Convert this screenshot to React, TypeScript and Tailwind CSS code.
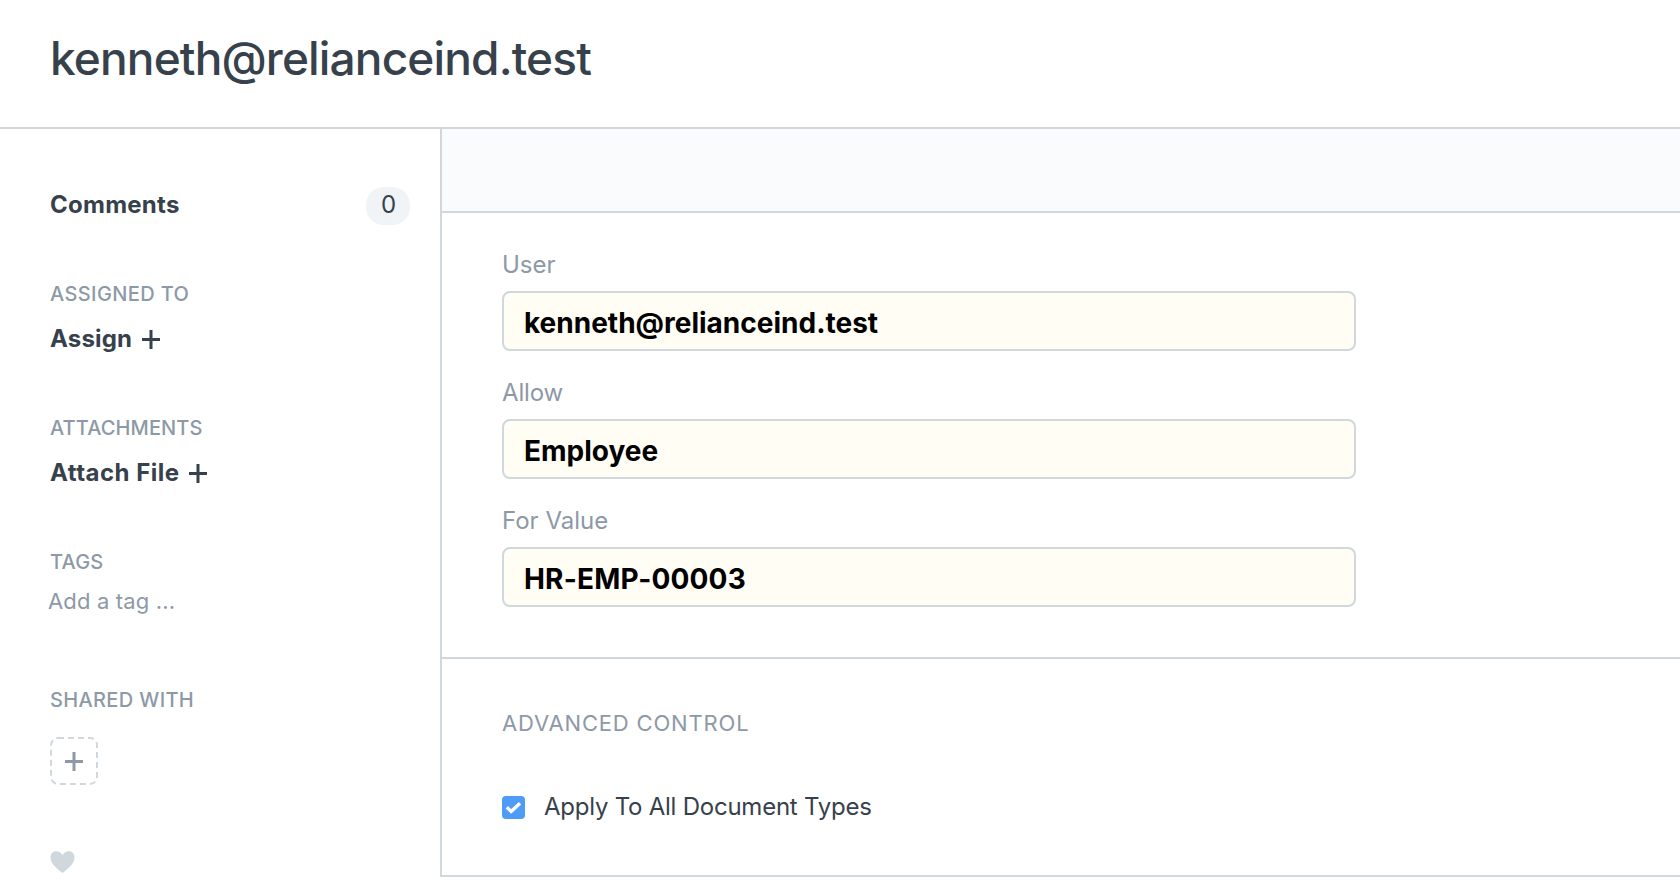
import type { ReactNode } from "react";

function Plus({ className = "" }: { className?: string }) {
  return (
    <svg className={`h-[19px] w-[18px] shrink-0 ${className}`} viewBox="0 0 18 19" fill="none" stroke="currentColor" strokeWidth="3">
      <path d="M0 9.5h18M9 0v19" />
    </svg>
  );
}

function SideHeading({ children, className = "" }: { children: ReactNode; className?: string }) {
  return <h2 className={`h-7 text-[20px] leading-7 font-medium whitespace-nowrap text-[#8d99a6] ${className}`}>{children}</h2>;
}

function SideAction({ label, spacing }: { label: string; spacing: string }) {
  return (
    <button className="mt-4 flex h-[30px] items-center text-2xl leading-[30px] font-bold whitespace-nowrap">
      <span className={spacing}>{label}</span>
      <Plus className="ml-[10px]" />
    </button>
  );
}

function Field({ label, value, labelSpacing, spacing }: { label: string; value: string; labelSpacing: string; spacing: string }) {
  return (
    <div className="mb-[26px]">
      <div className={`h-[42px] pt-px text-2xl leading-[30px] text-[#8d99a6] ${labelSpacing}`}>{label}</div>
      <div className="flex h-[60px] w-[854px] items-center rounded-[8px] border-2 border-[#d1d8dd] bg-[#fffdf4] pt-[3px] pl-[20px] text-[28px] leading-[34px] font-bold text-black">
        <span className={spacing}>{value}</span>
      </div>
    </div>
  );
}

export default function App() {
  return (
    <div className="flex h-[887px] w-full flex-col overflow-hidden bg-white font-['Inter',sans-serif] text-[#36414c]">
      <header className="h-[129px] shrink-0 border-b-2 border-[#d1d8dd] pt-[29px] pl-[50px]">
        <h1 className="text-[46px] leading-[58px] font-medium tracking-[-0.85px]">kenneth@relianceind.test</h1>
      </header>
      <div className="flex min-h-0 flex-1">
        <aside className="w-[440px] shrink-0 pt-[58px] pl-[50px]">
          <div className="flex h-[38px] w-[360px] items-center justify-between text-2xl leading-[30px]">
            <span className="pb-[2px] font-bold tracking-[0.25px]">Comments</span>
            <span className="flex h-[38px] w-11 items-center justify-center rounded-[18px] bg-[#f0f4f7] pb-[3px] pl-px">0</span>
          </div>
          <SideHeading className="mt-[55px] tracking-[0.38px]">ASSIGNED TO</SideHeading>
          <SideAction label="Assign" spacing="tracking-[0.15px]" />
          <SideHeading className="mt-[60px] tracking-[0.12px]">ATTACHMENTS</SideHeading>
          <SideAction label="Attach File" spacing="tracking-[0.48px]" />
          <SideHeading className="mt-[60px] tracking-[0.2px]">TAGS</SideHeading>
          <div className="mt-[11px] -ml-[2px] h-7 text-[22px] leading-7 tracking-[0.15px] text-[#8d99a6]">Add a tag ...</div>
          <SideHeading className="mt-[71px] tracking-[0.35px]">SHARED WITH</SideHeading>
          <svg className="mt-[23px] h-12 w-12 text-[#8d99a6]" viewBox="0 0 48 48" fill="none">
            <rect x="1" y="1" width="46" height="46" rx="7" stroke="#d1d8dd" strokeWidth="2" strokeDasharray="6 4" />
            <path d="M15 24.5h18M24 15v19" stroke="currentColor" strokeWidth="3" />
          </svg>
          <svg className="mt-[66px] h-[22px] w-[25px]" viewBox="0 0 25 22" fill="#d1d8dd">
            <path d="M12.5 4C14.8-.9 24.5-1.7 24.5 6.7C24.5 13 17.6 17.6 12.5 22C7.4 17.6.5 13 .5 6.7C.5-1.7 10.2-.9 12.5 4Z" />
          </svg>
        </aside>
        <main className="h-[748px] flex-1 border-b-2 border-l-2 border-[#d1d8dd]">
          <div className="h-[84px] border-b-2 border-[#d1d8dd] bg-[#fafbfc]" />
          <section className="h-[446px] border-b-2 border-[#d1d8dd] pt-9 pl-[60px]">
            <Field label="User" value="kenneth@relianceind.test" labelSpacing="" spacing="" />
            <Field label="Allow" value="Employee" labelSpacing="tracking-[-0.15px]" spacing="" />
            <Field label="For Value" value="HR-EMP-00003" labelSpacing="" spacing="tracking-[0.18px]" />
          </section>
          <section className="pt-[50px] pl-[60px]">
            <h2 className="h-7 text-[22px] leading-7 tracking-[0.83px] text-[#8d99a6]">ADVANCED CONTROL</h2>
            <label className="mt-[55px] flex h-[30px] items-center text-2xl leading-[30px]">
              <svg className="mt-px h-[23px] w-[23px]" viewBox="0 0 23 23" fill="none">
                <rect width="23" height="23" rx="4" fill="#4f9bf8" />
                <path d="M4.8 11.2l4.4 4.2L18 7.2" stroke="#fff" strokeWidth="3.4" />
              </svg>
              <span className="ml-[19px] tracking-[-0.24px]">Apply To All Document Types</span>
            </label>
          </section>
        </main>
      </div>
    </div>
  );
}
